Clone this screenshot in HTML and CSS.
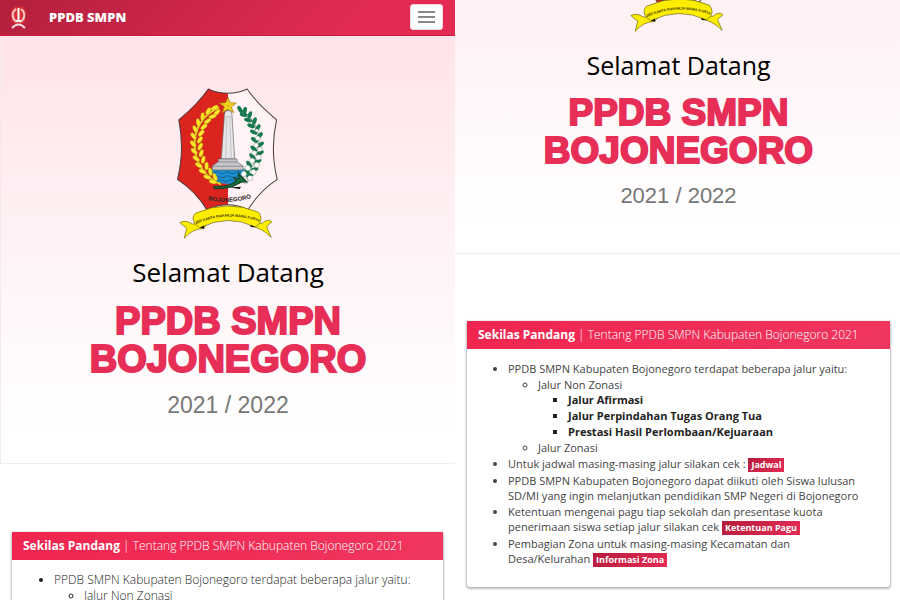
FILE: index.html
```html
<!DOCTYPE html>
<html lang="id">
<head>
<meta charset="utf-8">
<meta name="viewport" content="width=device-width, initial-scale=1">
<title>PPDB SMPN Bojonegoro</title>
<link rel="stylesheet" href="styles.css">
</head>
<body>
<svg class="defs" aria-hidden="true">
  <defs>
    <clipPath id="left-half"><path d="M0 0H191V495H0Z"/></clipPath>
    <path id="name-arc" d="M126 356Q190 373 266 350"/>
    <path id="motto-arc" d="M94 430Q190 388 285 423"/>
    <g id="leaf"><ellipse rx="12" ry="6"/></g>
    <symbol id="crest" viewBox="36 20 310 460">
      <path id="shield" d="M132 26Q191 52 248 26Q278 70 336 118Q316 208 338 296Q284 332 251 386Q191 358 127 386Q95 332 40 296Q62 208 44 118Q102 70 132 26Z" fill="#fff3f5"/>
      <path d="M132 26Q191 52 248 26Q278 70 336 118Q316 208 338 296Q284 332 251 386Q191 358 127 386Q95 332 40 296Q62 208 44 118Q102 70 132 26Z" fill="#dc241f" clip-path="url(#left-half)"/>
      <path d="M132 26Q191 52 248 26Q278 70 336 118Q316 208 338 296Q284 332 251 386Q191 358 127 386Q95 332 40 296Q62 208 44 118Q102 70 132 26Z" fill="none" stroke="#4b3c3e" stroke-width="3"/>
      <path d="M142 266H240L232 296Q210 316 190 309Q166 310 151 298Z" fill="#1b8fd0"/>
      <path d="M148 276q8-6 16 0t16 0t16 0t16 0t20 0M150 288q8-6 16 0t16 0t16 0t16 0t16 0M160 300q8-6 16 0t16 0t16 0" fill="none" stroke="#124d78" stroke-width="2"/>
      <path d="M180 102L184 91H199L203 102V108L211 235H171L180 108Z" fill="#e6e6e8" stroke="#65656a" stroke-width="2"/>
      <path d="M187 110L184 234M196 110L201 234M179 108H204" stroke="#b6b6ba" stroke-width="2"/>
      <path d="M162 235H218V243L236 256V268H144V256L162 243Z" fill="#c6c6c9" stroke="#66666a" stroke-width="2"/>
      <path d="M162 244H218M145 257H236" stroke="#77777b" stroke-width="2"/>
      <path d="M164 82C60 124 72 270 170 311" fill="none" stroke="#7a6511" stroke-width="7"/>
      <path d="M164 82C60 124 72 270 170 311" fill="none" stroke="#f8df22" stroke-width="5"/>
      <g fill="#fbe62a" stroke="#98740a" stroke-width="1">
        <use href="#leaf" transform="translate(151 82) rotate(-26)"/><use href="#leaf" transform="translate(158 96) rotate(-45)"/>
        <use href="#leaf" transform="translate(132 92) rotate(-60)"/><use href="#leaf" transform="translate(145 108) rotate(-20)"/>
        <use href="#leaf" transform="translate(115 108) rotate(-85)"/><use href="#leaf" transform="translate(130 122) rotate(-35)"/>
        <use href="#leaf" transform="translate(102 126) rotate(-100)"/><use href="#leaf" transform="translate(119 139) rotate(-42)"/>
        <use href="#leaf" transform="translate(93 146) rotate(-115)"/><use href="#leaf" transform="translate(111 158) rotate(-48)"/>
        <use href="#leaf" transform="translate(88 167) rotate(55)"/><use href="#leaf" transform="translate(107 178) rotate(-55)"/>
        <use href="#leaf" transform="translate(87 190) rotate(50)"/><use href="#leaf" transform="translate(108 198) rotate(-62)"/>
        <use href="#leaf" transform="translate(90 212) rotate(43)"/><use href="#leaf" transform="translate(111 218) rotate(-70)"/>
        <use href="#leaf" transform="translate(96 234) rotate(36)"/><use href="#leaf" transform="translate(117 237) rotate(-78)"/>
        <use href="#leaf" transform="translate(104 254) rotate(30)"/><use href="#leaf" transform="translate(127 256) rotate(-90)"/>
        <use href="#leaf" transform="translate(115 272) rotate(24)"/><use href="#leaf" transform="translate(138 273) rotate(-100)"/>
        <use href="#leaf" transform="translate(129 289) rotate(18)"/><use href="#leaf" transform="translate(152 289) rotate(-110)"/>
        <use href="#leaf" transform="translate(146 303) rotate(10)"/>
      </g>
      <path d="M222 84C308 124 300 250 218 306" fill="none" stroke="#398365" stroke-width="2"/>
      <g fill="#18794e">
        <use href="#leaf" transform="translate(227 87) rotate(60)"/><use href="#leaf" transform="translate(241 91) rotate(105)"/>
        <use href="#leaf" transform="translate(238 103) rotate(10)"/><use href="#leaf" transform="translate(256 104) rotate(110)"/>
        <use href="#leaf" transform="translate(251 119) rotate(15)"/><use href="#leaf" transform="translate(270 122) rotate(110)"/>
        <use href="#leaf" transform="translate(260 136) rotate(20)"/><use href="#leaf" transform="translate(280 142) rotate(120)"/>
        <use href="#leaf" transform="translate(268 155) rotate(25)"/><use href="#leaf" transform="translate(286 165) rotate(130)"/>
        <use href="#leaf" transform="translate(270 178) rotate(35)"/><use href="#leaf" transform="translate(288 192) rotate(140)"/>
        <use href="#leaf" transform="translate(268 204) rotate(40)"/><use href="#leaf" transform="translate(287 217) rotate(150)"/>
        <use href="#leaf" transform="translate(264 228) rotate(50)"/><use href="#leaf" transform="translate(280 242) rotate(155)"/>
        <use href="#leaf" transform="translate(254 251) rotate(55)"/><use href="#leaf" transform="translate(270 266) rotate(165)"/>
        <use href="#leaf" transform="translate(248 272) rotate(60)"/><use href="#leaf" transform="translate(256 284) rotate(160)"/>
      </g>
      <g fill="#fff" stroke="#45574d" stroke-width="1">
        <circle cx="277" cy="150" r="5"/><circle cx="280" cy="173" r="7"/><circle cx="275" cy="194" r="7"/><circle cx="286" cy="206" r="7"/><circle cx="269" cy="217" r="7"/>
        <circle cx="282" cy="230" r="8"/><circle cx="263" cy="240" r="8"/><circle cx="277" cy="253" r="8"/><circle cx="250" cy="262" r="8"/>
        <circle cx="267" cy="274" r="8"/><circle cx="238" cy="280" r="8"/><circle cx="257" cy="292" r="8"/><circle cx="243" cy="301" r="8"/>
      </g>
      <path d="M148 317Q190 320 215 301L208 291L224 294L222 277L231 288L248 304L232 304L218 311Q190 327 150 323Z" fill="#166b3d" stroke="#173c26" stroke-width="3"/>
      <path d="M196 320L230 318L226 325Z" fill="#111"/>
      <path d="M191 50L197 67L216 68L201 79L208 97L191 86L174 97L180 79L165 68L184 67Z" fill="#f7dd20" stroke="#94700c" stroke-width="2"/>
      <path d="M191 53V76L206 95M191 76L214 69M191 76L176 95M191 76L167 69" fill="none" stroke="#b88a11" stroke-width="1"/>
      <text class="crest-name"><textPath href="#name-arc" startOffset="50%">BOJONEGORO</textPath></text>
      <path d="M84 429Q65 416 47 425L68 442L60 472Q86 442 119 443L127 430Z" fill="#ffed00" stroke="#68640b" stroke-width="2"/>
      <path d="M293 427Q310 411 322 423L306 437L320 469Q289 438 259 437L254 425Z" fill="#ffed00" stroke="#68640b" stroke-width="2"/>
      <path d="M94 397Q189 355 282 394Q297 414 283 430L272 438Q190 398 106 441L91 427Q81 408 94 397Z" fill="#ffed00" stroke="#68640b" stroke-width="2"/>
      <path d="M106 441L119 434L120 443ZM259 432L273 438L259 438Z" fill="#111"/>
      <text class="crest-motto"><textPath href="#motto-arc" startOffset="50%">JER KARTA RAHARJA MAWA KARYA</textPath></text>
    </symbol>
  </defs>
</svg>
<main class="screens">
  <section class="screen">
    <nav class="navbar">
      <a class="brand" href="#beranda">
        <svg class="brand-mark" viewBox="0 0 17 24" aria-hidden="true">
          <path d="M5 1Q8.500 3 12 1L16 6Q15 11 16 16L11 20H6L1 16Q2 11 1 6Z" fill="#d93236"/>
          <path d="M6 4C1 8 2 14 7 17M11 4C16 8 15 14 10 17" fill="none" stroke="#f4c9cc" stroke-width="2"/>
          <path d="M8.500 3V17M6 16H11" fill="none" stroke="#fff" stroke-width="2"/>
          <path d="M2 23Q8.500 16 15 23" fill="none" stroke="#f5dce0" stroke-width="2"/>
        </svg>
        <span>PPDB SMPN</span>
      </a>
      <button class="menu-button" type="button" aria-label="Menu"><span></span><span></span><span></span></button>
    </nav>
    <header class="hero" id="beranda">
      <div class="crest-box"><svg class="crest" role="img" aria-label="Bojonegoro"><use href="#crest"/></svg></div>
      <p class="welcome">Selamat Datang</p>
      <h1>PPDB SMPN<br>BOJONEGORO</h1>
      <p class="year">2021 / 2022</p>
    </header>
    <article class="panel">
      <h2><strong>Sekilas Pandang</strong> | Tentang PPDB SMPN Kabupaten Bojonegoro 2021</h2>
      <ul>
        <li>PPDB SMPN Kabupaten Bojonegoro terdapat beberapa jalur yaitu:
          <ul><li>Jalur Non Zonasi</li></ul>
        </li>
      </ul>
    </article>
  </section>
  <section class="screen scrolled">
    <header class="hero">
      <div class="crest-box"><svg class="crest" role="img" aria-label="Bojonegoro"><use href="#crest"/></svg></div>
      <p class="welcome">Selamat Datang</p>
      <h1>PPDB SMPN<br>BOJONEGORO</h1>
      <p class="year">2021 / 2022</p>
    </header>
    <article class="panel">
      <h2><strong>Sekilas Pandang</strong> | Tentang PPDB SMPN Kabupaten Bojonegoro 2021</h2>
      <ul>
        <li>PPDB SMPN Kabupaten Bojonegoro terdapat beberapa jalur yaitu:
          <ul>
            <li>Jalur Non Zonasi
              <ul class="routes">
                <li>Jalur Afirmasi</li>
                <li>Jalur Perpindahan Tugas Orang Tua</li>
                <li>Prestasi Hasil Perlombaan/Kejuaraan</li>
              </ul>
            </li>
            <li>Jalur Zonasi</li>
          </ul>
        </li>
        <li>Untuk jadwal masing-masing jalur silakan cek : <a class="tag" href="#jadwal">Jadwal</a></li>
        <li>PPDB SMPN Kabupaten Bojonegoro dapat diikuti oleh Siswa lulusan SD/MI yang ingin melanjutkan pendidikan SMP Negeri di Bojonegoro</li>
        <li>Ketentuan mengenai pagu tiap sekolah dan presentase kuota penerimaan siswa setiap jalur silakan cek <a class="tag" href="#pagu">Ketentuan Pagu</a></li>
        <li>Pembagian Zona untuk masing-masing Kecamatan dan Desa/Kelurahan <a class="tag" href="#zona">Informasi Zona</a></li>
      </ul>
    </article>
  </section>
</main>
</body>
</html>
```
FILE: styles.css
```css
* { box-sizing: border-box; }

body {
  margin: 0;
  background: #fff;
  color: #333;
  font-family: "Open Sans", sans-serif;
  font-size: 12px;
  line-height: 15px;
}

h1, h2, p, ul { margin: 0; }

.defs { position: absolute; width: 0; height: 0; }

.screens {
  display: grid;
  grid-template-columns: 91fr 89fr;
  height: 100vh;
  overflow: hidden;
}

.screen { min-width: 0; min-height: 0; overflow: hidden; }

.navbar {
  display: flex;
  align-items: center;
  justify-content: space-between;
  height: 36px;
  padding: 0 12px 2px 10px;
  background: linear-gradient(135deg, #b31f3c, #e42b54 80%);
  border-bottom: 1px solid #c91d40;
}

.brand {
  display: flex;
  align-items: center;
  gap: 22px;
  color: #fff;
  font-size: 13px;
  font-weight: 800;
  line-height: 16px;
  text-decoration: none;
}

.brand-mark { width: 17px; height: 24px; }

.menu-button {
  display: flex;
  flex-direction: column;
  align-items: center;
  justify-content: center;
  gap: 3px;
  width: 33px;
  height: 26px;
  padding: 0;
  background: #fff;
  border: 1px solid #ead5da;
  border-radius: 3px;
}

.menu-button span { width: 17px; height: 2px; background: #888; }

.hero {
  padding: 51px 12px 44px;
  background: linear-gradient(#ffe4e9, #fff 92%);
  border-bottom: 1px solid #eee;
  border-left: 1px solid #f4e9eb;
  text-align: center;
}

.crest-box { display: flex; align-items: flex-end; justify-content: center; }

.crest { flex: none; width: 104px; height: 154px; }

.crest-name { fill: #2d2525; font: bold 18px "Liberation Sans", sans-serif; text-anchor: middle; }

.crest-motto { fill: #474000; font: bold 11px "Liberation Sans", sans-serif; text-anchor: middle; }

.welcome {
  margin-top: 14px;
  color: #000;
  font-size: 26px;
  font-weight: 500;
  line-height: 34px;
}

h1 {
  margin-top: 13px;
  color: #e62e57;
  font-family: "Liberation Sans", sans-serif;
  font-size: 38px;
  font-weight: 900;
  line-height: 38px;
  -webkit-text-stroke: 2px #e62e57;
}

.year {
  margin-top: 13px;
  color: #777;
  font-family: "Liberation Sans", sans-serif;
  font-size: 23px;
  line-height: 28px;
}

.panel {
  margin: 68px 12px 0;
  padding-bottom: 20px;
  border-radius: 3px;
  box-shadow: 0 1px 2px 1px #bbb;
}

.panel h2 {
  padding: 6px 11px;
  background: linear-gradient(135deg, #ef254f, #f0365f);
  color: #fff;
  font-size: 12px;
  font-weight: 300;
  line-height: 16px;
}

.panel h2 strong { font-weight: 700; }

.panel > ul { padding: 12px 20px 0 42px; color: #222; font-weight: 300; }

.panel li ul { padding-left: 30px; }

.panel li + li, .panel li ul { margin-top: 1px; }

.panel .routes { margin-top: 0; color: #222; font-weight: 700; }

.tag {
  display: inline-block;
  padding: 0 3px;
  background: linear-gradient(135deg, #b51c3b, #e62c56);
  color: #fff;
  font-size: 9px;
  font-weight: 700;
  line-height: 14px;
  text-decoration: none;
}

.scrolled .hero {
  padding: 0 12px 43px 14px;
  background: linear-gradient(#fff0f3, #fff 88%);
  border-left: 0;
}

.scrolled .crest-box { height: 34px; overflow: hidden; }

.scrolled .welcome { font-size: 25px; }

.scrolled h1 { margin-top: 12px; font-size: 37px; }

.scrolled .year { font-size: 22px; margin-top: 12px; }

.scrolled .panel { margin: 67px 10px 0 12px; }

.scrolled .panel > ul { padding-right: 26px; padding-left: 41px; color: #444; font-size: 11px; font-weight: 400; }
```
